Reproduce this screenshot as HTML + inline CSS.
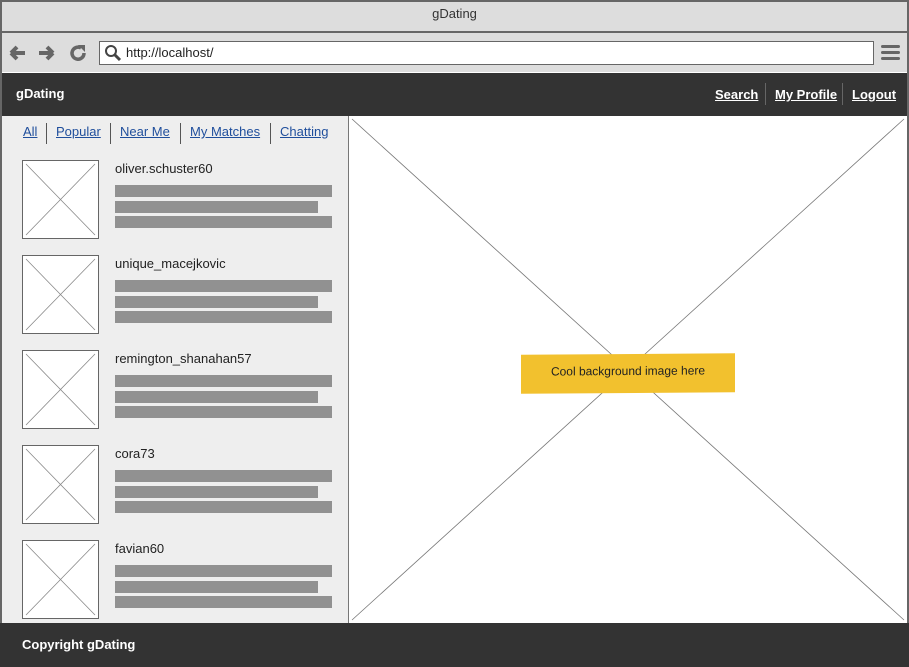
<!DOCTYPE html>
<html><head><style>
*{margin:0;padding:0;box-sizing:border-box}
body{width:909px;height:667px;overflow:hidden;font-family:"Liberation Sans",sans-serif;background:#fff;position:relative}
.a{position:absolute}
.nav a{color:#fff;text-decoration:underline;font-weight:bold;font-size:13px}
.tab{color:#1f4e9c;text-decoration:underline;font-size:13px}
.bar{position:absolute;background:#919191;height:12px}
</style></head><body>
<div class="a" style="left:0;top:0;width:909px;height:667px;border:2px solid #666;border-bottom:none"></div>
<div class="a" style="left:2px;top:2px;width:905px;height:31px;background:#ddd;border-bottom:2px solid #666;text-align:center;font-size:13px;line-height:24px;color:#333">gDating</div>
<div class="a" style="left:2px;top:33px;width:905px;height:39px;background:#ddd"></div>
<svg class="a" style="left:8px;top:42px" width="80" height="22">
<path d="M3 11h14M3 11l6-6M3 11l6 6" stroke="#666" stroke-width="4" fill="none"/>
<path d="M45 11h-14M45 11l-6-6M45 11l-6 6" stroke="#666" stroke-width="4" fill="none"/>
<path d="M73 6a6 6 0 1 0 3 5" stroke="#666" stroke-width="3.5" fill="none"/><path d="M70 3l7 0 0 7z" fill="#666"/>
</svg>
<div class="a" style="left:99px;top:41px;width:775px;height:24px;background:#fff;border:1.5px solid #666"></div>
<svg class="a" style="left:104px;top:44px" width="18" height="18"><circle cx="7" cy="7" r="5" stroke="#444" stroke-width="2" fill="none"/><path d="M11 11l5 5" stroke="#444" stroke-width="3"/></svg>
<div class="a" style="left:126px;top:45px;font-size:13px;color:#222">http://localhost/</div>
<div class="a" style="left:881px;top:45px;width:19px;height:3px;background:#666;border-radius:2px;box-shadow:0 6px 0 #666,0 12px 0 #666"></div>
<div class="a nav" style="left:2px;top:73px;width:905px;height:43px;background:#333">
<div class="a" style="left:14px;top:13px;color:#fff;font-weight:bold;font-size:13px">gDating</div>
<div class="a" style="left:713px;top:13px"><a>Search</a></div>
<div class="a" style="left:763px;top:10px;width:1px;height:22px;background:#666"></div>
<div class="a" style="left:773px;top:13px"><a>My Profile</a></div>
<div class="a" style="left:840px;top:10px;width:1px;height:22px;background:#666"></div>
<div class="a" style="left:850px;top:13px"><a>Logout</a></div>
</div>
<div class="a" style="left:2px;top:116px;width:347px;height:507px;background:#eee;border-right:1px solid #777"></div>
<div class="a tab" style="left:23px;top:124px">All</div>
<div class="a" style="left:46px;top:123px;width:1px;height:21px;background:#555"></div>
<div class="a tab" style="left:56px;top:124px">Popular</div>
<div class="a" style="left:110px;top:123px;width:1px;height:21px;background:#555"></div>
<div class="a tab" style="left:120px;top:124px">Near Me</div>
<div class="a" style="left:180px;top:123px;width:1px;height:21px;background:#555"></div>
<div class="a tab" style="left:190px;top:124px">My Matches</div>
<div class="a" style="left:270px;top:123px;width:1px;height:21px;background:#555"></div>
<div class="a tab" style="left:280px;top:124px">Chatting</div>
<div id="list"></div>
<svg class="a" style="left:349px;top:116px" width="558" height="507"><rect width="558" height="507" fill="#fff"/><path d="M3 3L555 504M555 3L3 504" stroke="#777" stroke-width="0.8"/></svg>
<div class="a" style="left:521px;top:354px;width:214px;height:39px;background:#f2c12e;transform:skewY(-0.4deg);text-align:center;line-height:34px;font-size:12px;color:#222">Cool background image here</div>
<div class="a" style="left:0;top:623px;width:909px;height:44px;background:#333;color:#fff;font-weight:bold;font-size:13px;padding:14px 22px">Copyright gDating</div>
<script>
var n=["oliver.schuster60","unique_macejkovic","remington_shanahan57","cora73","favian60"],h="";
n.forEach(function(s,i){var y=160+i*95;
h+='<svg class="a" style="left:22px;top:'+y+'px" width="77" height="79"><rect x=".5" y=".5" width="76" height="78" fill="#fff" stroke="#666"/><path d="M4 4L73 75M73 4L4 75" stroke="#888" stroke-width=".8"/></svg>';
h+='<div class="a" style="left:115px;top:'+(y+1)+'px;font-size:13px;color:#222">'+s+'</div>';
h+='<div class="bar" style="left:115px;top:'+(y+25)+'px;width:217px"></div><div class="bar" style="left:115px;top:'+(y+41)+'px;width:203px"></div><div class="bar" style="left:115px;top:'+(y+56)+'px;width:217px"></div>';});
document.getElementById("list").innerHTML=h;
</script>
</body></html>
